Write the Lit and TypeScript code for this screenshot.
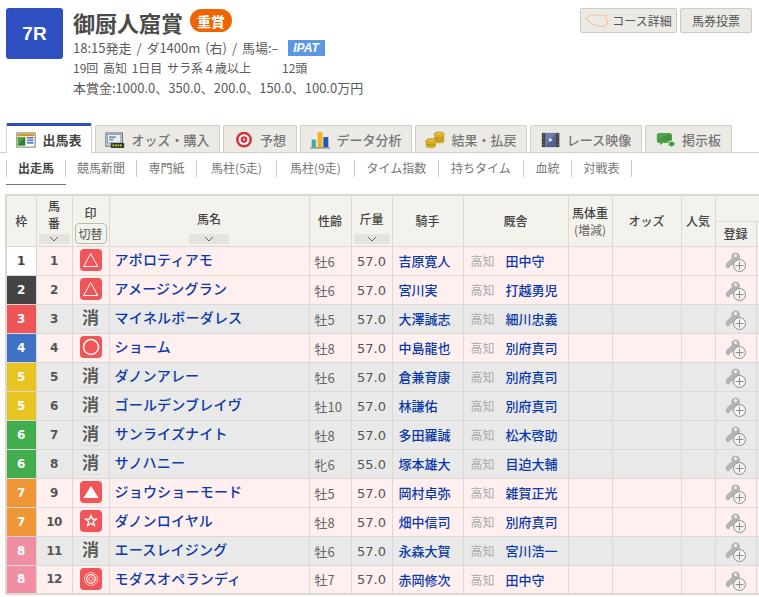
import { LitElement, css, html, svg } from 'lit';
import { customElement } from 'lit/decorators.js';

type Horse = { waku: number; no: number; mark: string; name: string; sex: string; kg: string; jockey: string; trainer: string };

const horses: Horse[] = [
  { waku: 1, no: 1, mark: 'tri', name: 'アポロティアモ', sex: '牡6', kg: '57.0', jockey: '吉原寛人', trainer: '田中守' },
  { waku: 2, no: 2, mark: 'tri', name: 'アメージングラン', sex: '牡6', kg: '57.0', jockey: '宮川実', trainer: '打越勇児' },
  { waku: 3, no: 3, mark: 'off', name: 'マイネルボーダレス', sex: '牡5', kg: '57.0', jockey: '大澤誠志', trainer: '細川忠義' },
  { waku: 4, no: 4, mark: 'circle', name: 'ショーム', sex: '牡8', kg: '57.0', jockey: '中島龍也', trainer: '別府真司' },
  { waku: 5, no: 5, mark: 'off', name: 'ダノンアレー', sex: '牡6', kg: '57.0', jockey: '倉兼育康', trainer: '別府真司' },
  { waku: 5, no: 6, mark: 'off', name: 'ゴールデンブレイヴ', sex: '牡10', kg: '57.0', jockey: '林謙佑', trainer: '別府真司' },
  { waku: 6, no: 7, mark: 'off', name: 'サンライズナイト', sex: '牡8', kg: '57.0', jockey: '多田羅誠', trainer: '松木啓助' },
  { waku: 6, no: 8, mark: 'off', name: 'サノハニー', sex: '牝6', kg: '55.0', jockey: '塚本雄大', trainer: '目迫大輔' },
  { waku: 7, no: 9, mark: 'fill', name: 'ジョウショーモード', sex: '牡5', kg: '57.0', jockey: '岡村卓弥', trainer: '雑賀正光' },
  { waku: 7, no: 10, mark: 'star', name: 'ダノンロイヤル', sex: '牡8', kg: '57.0', jockey: '畑中信司', trainer: '別府真司' },
  { waku: 8, no: 11, mark: 'off', name: 'エースレイジング', sex: '牡6', kg: '57.0', jockey: '永森大賀', trainer: '宮川浩一' },
  { waku: 8, no: 12, mark: 'double', name: 'モダスオペランディ', sex: '牡7', kg: '57.0', jockey: '赤岡修次', trainer: '田中守' },
];

const tabIcons = [
  svg`<rect x="1" y="2" width="22" height="17" fill="#fff" stroke="#5a6a3a"/><rect x="2" y="3" width="20" height="3" fill="#e0902c"/><path d="M2 17V7h9v10z" fill="#4da04a"/><path d="M2 17l9-10v10z" fill="#2f7d36"/><path d="M13 8h8M13 11h8M13 14h8" stroke="#5b82c8" stroke-width="2"/>`,
  svg`<rect x="1" y="2" width="20" height="16" fill="#c8d3dc" stroke="#55606a"/><rect x="3" y="4" width="16" height="10" fill="#e8eef2" stroke="#8a98a4"/><path d="M5 7h8M5 10h5" stroke="#7d92a6" stroke-width="2"/><rect x="7" y="14" width="16" height="6" fill="#2f3a22"/><path d="M9 17h12" stroke="#d8e04a" stroke-width="2" stroke-dasharray="2 1"/>`,
  svg`<circle cx="12" cy="10" r="9.500" fill="#d8333a"/><circle cx="12" cy="10" r="6.500" fill="#fff"/><circle cx="12" cy="10" r="4" fill="#d8333a"/><circle cx="12" cy="10" r="1.500" fill="#f6c8c8"/>`,
  svg`<rect x="2" y="10" width="5" height="9" fill="#3fa9a0"/><rect x="9" y="1" width="6" height="18" fill="#f0b429"/><rect x="16" y="7" width="6" height="12" fill="#2a55b8"/><path d="M0 20h24" stroke="#4a4a4a"/>`,
  svg`<ellipse cx="17" cy="4" rx="6" ry="3" fill="#e4c23a" stroke="#a88a1c"/><path d="M11 4v9c0 2 12 2 12 0V4" fill="#d4ac28"/><path d="M11 7c0 2 12 2 12 0M11 10c0 2 12 2 12 0" fill="none" stroke="#a88a1c"/><ellipse cx="7" cy="12" rx="6" ry="3" fill="#e4c23a" stroke="#a88a1c"/><path d="M1 12v6c0 3 12 3 12 0v-6" fill="#d4ac28"/><path d="M1 15c0 2 12 2 12 0" fill="none" stroke="#a88a1c"/>`,
  svg`<rect x="1" y="2" width="21" height="17" fill="#3e3f48"/><rect x="5" y="2" width="13" height="17" fill="#6f80a8"/><path d="M5 19L18 2v17z" fill="#56658c"/><path d="M10 8l4 2.500-4 2.500z" fill="#fff"/><path d="M2 4h2M2 8h2M2 12h2M2 16h2M19 4h2M19 8h2M19 12h2M19 16h2" stroke="#888"/>`,
  svg`<path d="M4 2h12a3 3 0 0 1 3 3v6a3 3 0 0 1-3 3H8l-3 3v-3a3 3 0 0 1-4-3V5a3 3 0 0 1 3-3z" fill="#4fa64a"/><path d="M1 12L16 2l3 3v6z" fill="#3f8f3c" opacity=".7"/><path d="M16 12h4a3 3 0 0 1 0 6v2l-3-2h-3z" fill="#45a045" stroke="#fff"/>`,
];

const tabs = [
  { label: '出馬表', active: true },
  { label: 'オッズ・購入' },
  { label: '予想' },
  { label: 'データ分析' },
  { label: '結果・払戻' },
  { label: 'レース映像' },
  { label: '掲示板' },
];

const subs = ['出走馬', '競馬新聞', '専門紙', '馬柱(5走)', '馬柱(9走)', 'タイム指数', '持ちタイム', '血統', '対戦表'];

const markIcons: Record<string, unknown> = {
  tri: svg`<path d="M10.700 4.500L17.700 17.500H3.700z" fill="none" stroke="#fff" stroke-width="1"/>`,
  circle: svg`<circle cx="11" cy="11" r="7.500" fill="none" stroke="#fff" stroke-width="1.500"/>`,
  fill: svg`<path d="M11 5L18.500 17h-15z" fill="#fff"/>`,
  star: svg`<path d="M11 5.500l1.500 3.700h3.900l-3.100 2.400 1.100 3.900-3.400-2.300-3.400 2.300 1.100-3.900-3.100-2.400h3.900z" fill="none" stroke="#fff" stroke-width="1.300"/>`,
  double: svg`<circle cx="11" cy="11" r="6.500" fill="none" stroke="#fbc9bd" stroke-width="1"/><circle cx="11" cy="11" r="4.300" fill="none" stroke="#fff" stroke-width="1.200"/><circle cx="11" cy="11" r="2.200" fill="none" stroke="#fbc9bd" stroke-width="1"/>`,
};

@customElement('app-root')
export class AppRoot extends LitElement {
  static styles = css`
    :host {
      display: block;
      width: 759px;
      height: 597px;
      overflow: hidden;
      background: #fff;
      color: #555;
      font-family: "Noto Sans CJK JP", "Noto Sans", sans-serif;
      font-size: 13px;
    }
    .head {
      display: flex;
      padding: 8px 6px 0;
      height: 122px;
      box-sizing: border-box;
    }
    .race {
      width: 57px;
      height: 51px;
      background: #2e4fc0;
      border-radius: 3px;
      color: #fff;
      font: bold 19px "Liberation Sans", sans-serif;
      display: flex;
      align-items: center;
      justify-content: center;
      flex: none;
    }
    .info { margin-left: 10px; flex: 1; }
    .title { display: flex; height: 28px; }
    h1 {
      margin: 0;
      font-size: 22px;
      line-height: 28px;
      font-weight: 700;
      color: #4a4a4a;
    }
    .grade {
      margin: 1px 0 0 7px;
      background: #ee6400;
      color: #fff;
      font-size: 14px;
      font-weight: 700;
      height: 23px;
      width: 42px;
      border-radius: 12px;
      display: flex;
      align-items: center;
      justify-content: center;
    }
    .line { line-height: 20px; height: 20px; font-size: 13px; color: #5a5a5a; white-space: pre; display: flex; align-items: center; }
    .line.first { margin-top: 2px; word-spacing: 2px; }
    .line.small { font-size: 12px; word-spacing: 2px; }
    .count { margin-left: 31px; }
    .ipat {
      margin-left: 9px;
      width: 37px;
      height: 16px;
      background: #5d97e4;
      color: #fff;
      font: italic bold 12px "Liberation Sans", sans-serif;
      display: flex;
      align-items: center;
      justify-content: center;
    }
    .btns { display: flex; gap: 3px; align-items: flex-start; padding-right: 1px; }
    .btn {
      height: 25px;
      box-sizing: border-box;
      border: 1px solid #cfcbc0;
      border-radius: 2px;
      background: #ebeae5;
      color: #555;
      font-size: 12px;
      display: flex;
      align-items: center;
      justify-content: center;
    }
    .btn.course { width: 97px; gap: 3px; }
    .btn.vote { width: 72px; }
    .tabs {
      display: flex;
      height: 30px;
      padding-left: 6px;
      align-items: flex-end;
      gap: 3px;
      border-bottom: 1px solid #d3d0c9;
    }
    .tab {
      height: 27px;
      box-sizing: border-box;
      border: 1px solid #d3d0c9;
      border-bottom: 0;
      background: #eceae5;
      border-radius: 2px 2px 0 0;
      display: flex;
      align-items: center;
      justify-content: center;
      gap: 6px;
      padding-top: 1px;
      font-size: 13px;
      font-weight: 500;
      color: #777;
    }
    .tab svg { width: 20px; height: 18px; flex: none; }
    .tab.active {
      height: 30px;
      margin-bottom: -1px;
      padding-top: 0;
      background: #fff;
      border-top: 3px solid #2e4fc0;
      color: #444;
      font-weight: 700;
    }
    .subs { display: flex; height: 31px; padding: 7px 0 0 6px; box-sizing: border-box; }
    .sub {
      height: 17px;
      line-height: 15px;
      border-right: 1px solid #ccc8c0;
      font-size: 12px;
      color: #777;
      text-align: center;
      position: relative;
      box-sizing: border-box;
    }
    .sub.active { border-left: 1px solid #ccc8c0; color: #444; font-weight: 700; }
    .sub.active::after {
      content: "";
      position: absolute;
      left: -1px;
      right: -1px;
      top: 24px;
      border-bottom: 1px solid #7a766c;
    }
    .wrap { padding: 10px 0 0 5px; }
    table {
      border-collapse: collapse;
      table-layout: fixed;
      width: 790px;
      border: 2px solid #dcd9d3;
    }
    th, td {
      border: 1px solid #dcd9d3;
      padding: 0;
      text-align: center;
      font-weight: 400;
    }
    th { background: #f3f2ed; color: #444; font-size: 12px; font-weight: 500; line-height: 17px; }
    th.sort { vertical-align: bottom; }
    .lift { padding-bottom: 4px; }
    .sub-note { font-weight: 400; color: #666; }
    .sortbar {
      display: flex;
      align-items: center;
      justify-content: center;
      height: 10px;
      background: #e4e3de;
      margin: 3px auto 2px;
    }
    .sortbar svg { display: block; }
    .toggle {
      margin: 2px auto 2px;
      width: 32px;
      border: 1px solid #bdb9b0;
      border-radius: 4px;
      height: 21px;
      line-height: 19px;
      font-size: 12px;
      color: #555;
      box-sizing: border-box;
      font-weight: 400;
    }
    tr { height: 29px; }
    tr.top { height: 26px; }
    tr.low { height: 25px; }
    tr.on td { background: #fff0ef; }
    tr.off td { background: #e9e9e9; }
    td.waku { font: bold 12px "DejaVu Sans", sans-serif; }
    tr td.w1 { background: #fff; color: #444; }
    tr td.w2 { background: #444; color: #fff; }
    tr td.w3 { background: #ee5558; color: #fff; }
    tr td.w4 { background: #3f71c6; color: #fff; }
    tr td.w5 { background: #e8c322; color: #fff; }
    tr td.w6 { background: #41ad4e; color: #fff; }
    tr td.w7 { background: #ef9636; color: #fff; }
    tr td.w8 { background: #f08fa4; color: #fff; }
    td.no { font: bold 12px "DejaVu Sans", sans-serif; color: #555; letter-spacing: -.5px; }
    .mark { display: block; width: 22px; height: 22px; margin: 0 auto 1px; background: #f0555a; border-radius: 4px; }
    .gone {
      font-size: 17px;
      font-weight: 700;
      line-height: 22px;
      width: 22px;
      height: 24px;
      margin: 0 auto 2px;
      color: #5c5c5c;
      border-bottom: 1px solid #dedcd8;
      border-radius: 0 0 4px 4px;
      box-sizing: border-box;
    }
    td.name { text-align: left; padding: 0 0 3px 5px; font-size: 14px; letter-spacing: .2px; color: #0b3aa8; font-weight: 500; white-space: nowrap; }
    td.sex { text-align: left; padding: 1px 0 0 5px; font-size: 13px; color: #666; white-space: nowrap; }
    td.kg { font: 13px "DejaVu Sans", sans-serif; color: #555; padding-top: 1px; }
    td.jockey { text-align: left; padding: 0 0 0 6px; font-size: 13px; font-weight: 500; color: #0b3aa8; white-space: nowrap; }
    td.stable { text-align: left; padding: 0 0 0 7px; font-size: 13px; font-weight: 500; color: #0b3aa8; white-space: nowrap; }
    .loc { color: #aaa; margin-right: 11px; font-size: 12px; font-weight: 400; }
    .key { display: block; margin: 3px 0 0 8px; }
  `;

  private sortBar(width: number) {
    return html`<div class="sortbar" style="width:${width}px">
      <svg width="10" height="6" viewBox="0 0 10 6"><path d="M1 1l4 4 4-4" fill="none" stroke="#666"/></svg>
    </div>`;
  }

  private markCell(mark: string) {
    if (mark === 'off') return html`<div class="gone">消</div>`;
    return html`<svg class="mark" viewBox="0 0 22 22">${markIcons[mark]}</svg>`;
  }

  private keyIcon() {
    return html`<svg class="key" width="24" height="22" viewBox="0 0 24 22">
      <path d="M1.500 15l1-3 5-4.500 0-3c1-3 5-4 7-2s2 5 0 7l-3 1-3.500 4-2 .5-.5 2-2 .5z" fill="#b4b4b4"/>
      <circle cx="11.500" cy="4.500" r="1.500" fill="#f8f4f2"/>
      <circle cx="15.500" cy="14.500" r="6" fill="#f8f4f2" stroke="#8c8c8c"/>
      <path d="M15.500 10.500v8M11.500 14.500h8" stroke="#8c8c8c"/>
    </svg>`;
  }

  private row(h: Horse) {
    return html`<tr class=${h.mark === 'off' ? 'off' : 'on'}>
      <td class="waku w${h.waku}">${h.waku}</td>
      <td class="no">${h.no}</td>
      <td>${this.markCell(h.mark)}</td>
      <td class="name">${h.name}</td>
      <td class="sex">${h.sex}</td>
      <td class="kg">${h.kg}</td>
      <td class="jockey">${h.jockey}</td>
      <td class="stable"><span class="loc">高知</span>${h.trainer}</td>
      <td></td>
      <td></td>
      <td></td>
      <td>${this.keyIcon()}</td>
      <td></td>
    </tr>`;
  }

  render() {
    const tabWidths = [86, 125, 74, 112, 112, 112, 87];
    const subWidths = [60, 71, 60, 80, 78, 84, 85, 48, 60];
    const cols = [30, 36, 37, 200, 42, 41, 71, 105, 44, 69, 34, 41, 40];
    return html`
      <div class="head">
        <div class="race">7R</div>
        <div class="info">
          <div class="title"><h1>御厨人窟賞</h1><span class="grade">重賞</span></div>
          <div class="line first">18:15発走 / ダ1400m (右) / 馬場:–<span class="ipat">IPAT</span></div>
          <div class="line small"><span>19回 高知 1日目 サラ系４歳以上</span><span class="count">12頭</span></div>
          <div class="line">本賞金:1000.0、350.0、200.0、150.0、100.0万円</div>
        </div>
        <div class="btns">
          <div class="btn course">
            <svg width="24" height="14" viewBox="0 0 24 14"><path d="M.5 4.500L6 1l15 .5 1.500 8-5 3-10-2z" fill="none" stroke="#f3c6a6" stroke-width="1.200"/></svg>
            コース詳細
          </div>
          <div class="btn vote">馬券投票</div>
        </div>
      </div>
      <div class="tabs">
        ${tabs.map((t, i) => html`<div class="tab ${t.active ? 'active' : ''}" style="width:${tabWidths[i]}px">
          <svg viewBox="0 0 24 21">${tabIcons[i]}</svg>${t.label}
        </div>`)}
      </div>
      <div class="subs">
        ${subs.map((s, i) => html`<div class="sub ${i === 0 ? 'active' : ''}" style="width:${subWidths[i]}px">${s}</div>`)}
      </div>
      <div class="wrap">
        <table>
          <colgroup>${cols.map((c) => html`<col style="width:${c}px" />`)}</colgroup>
          <thead>
            <tr class="top">
              <th rowspan="2">枠</th>
              <th rowspan="2" class="sort">馬<br />番${this.sortBar(31)}</th>
              <th rowspan="2" class="sort">印<div class="toggle">切替</div></th>
              <th rowspan="2" class="sort"><div class="lift">馬名</div>${this.sortBar(40)}</th>
              <th rowspan="2">性齢</th>
              <th rowspan="2" class="sort"><div class="lift">斤量</div>${this.sortBar(36)}</th>
              <th rowspan="2">騎手</th>
              <th rowspan="2">厩舎</th>
              <th rowspan="2">馬体重<br /><span class="sub-note">(増減)</span></th>
              <th rowspan="2">オッズ</th>
              <th rowspan="2">人気</th>
              <th colspan="2"></th>
            </tr>
            <tr class="low">
              <th>登録</th>
              <th></th>
            </tr>
          </thead>
          <tbody>${horses.map((h) => this.row(h))}</tbody>
        </table>
      </div>
    `;
  }
}
